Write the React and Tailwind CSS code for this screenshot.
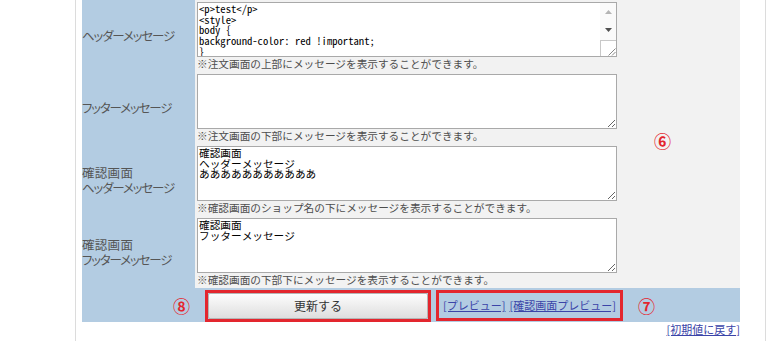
const BLUE = "bg-[#b3cce2]";
const TA =
  "text-black px-[1px] py-[1px] text-[10.67px] leading-[10.7px] font-['Noto_Sans_Mono_CJK_JP','Liberation_Mono',monospace]";

function Grip() {
  return (
    <svg width="9" height="9" viewBox="0 0 9 9" className="block">
      <path d="M8.5 1.5 L1.5 8.5 M8.5 5 L5 8.5" stroke="#888" strokeWidth="1" fill="none" />
    </svg>
  );
}

function ScrollArea({ value }) {
  return (
    <div className="flex w-[420px] h-[55px] border border-[#a9a9a9] bg-white">
      <textarea
        readOnly
        defaultValue={value}
        className={`flex-1 min-w-0 h-full border-0 outline-none bg-white overflow-hidden resize-none ${TA}`}
      />
      <div className="w-[16px] flex flex-col bg-[#fafafa]">
        <div className="h-[17px] flex items-center justify-center">
          <svg width="7" height="4" viewBox="0 0 7 4"><path d="M3.5 0 L7 4 L0 4 Z" fill="#b4b4b4" /></svg>
        </div>
        <div className="h-[20px] flex items-center justify-center">
          <svg width="7" height="4" viewBox="0 0 7 4"><path d="M0 0 L7 0 L3.5 4 Z" fill="#505050" /></svg>
        </div>
        <div className="flex-1 border-l border-t border-[#c8c8c8] bg-white flex items-end justify-end">
          <Grip />
        </div>
      </div>
    </div>
  );
}

function Row({ label, value, caption, scroll }) {
  return (
    <div className="flex h-[72px]">
      <div className={`w-[113px] shrink-0 ${BLUE} flex flex-col justify-center text-[12.5px] text-[#555]`}>
        {label}
      </div>
      <div className="flex-1 bg-[#f2f2f2] pt-[2px] pl-[2px]">
        {scroll ? (
          <ScrollArea value={value} />
        ) : (
          <textarea
            readOnly
            defaultValue={value}
            className={`block w-[420px] h-[55px] border border-[#a9a9a9] bg-white resize overflow-hidden ${TA}`}
          />
        )}
        <p className="text-[10.67px] leading-[13px] text-[#4d4d4d] whitespace-nowrap">{caption}</p>
      </div>
    </div>
  );
}

function Kana({ children }) {
  return <div className="h-[14px] leading-[14px] tracking-[-1.2px] [font-feature-settings:'palt']">{children}</div>;
}
function Kanji({ children }) {
  return <div className="h-[14px] leading-[14px] tracking-[0.3px]">{children}</div>;
}

export default function App() {
  return (
    <div className="w-[769px] h-[341px] bg-white overflow-hidden relative font-['Noto_Sans_CJK_JP','Liberation_Sans',sans-serif]">
      <div className="ml-[75px] w-[691px] h-[341px] border-l border-r border-[#dcdcdc] pl-[6px] pr-[25px]">
        <div className="relative">
          <Row
            label={<Kana>ヘッダーメッセージ</Kana>}
            value={"<p>test</p>\n<style>\nbody {\nbackground-color: red !important;\n}\n</style>\n<p>header</p>\n"}
            caption="※注文画面の上部にメッセージを表示することができます。"
            scroll
          />
          <Row
            label={<Kana>フッターメッセージ</Kana>}
            value=""
            caption="※注文画面の下部にメッセージを表示することができます。"
          />
          <Row
            label={<div className="flex flex-col gap-[1px] pt-[1px]"><Kanji>確認画面</Kanji><Kana>ヘッダーメッセージ</Kana></div>}
            value={"確認画面\nヘッダーメッセージ\nあああああああああああ"}
            caption="※確認画面のショップ名の下にメッセージを表示することができます。"
          />
          <Row
            label={<div className="flex flex-col gap-[1px] pt-[1px]"><Kanji>確認画面</Kanji><Kana>フッターメッセージ</Kana></div>}
            value={"確認画面\nフッターメッセージ"}
            caption="※確認画面の下部下にメッセージを表示することができます。"
          />
          <div className={`flex h-[34px] ${BLUE} pt-[2px]`}>
            <div className="w-[113px] shrink-0 flex justify-end items-center pr-[5px] pb-[2px]">
              <span className="text-[17px] font-bold leading-none text-[#e3262e]">⑧</span>
            </div>
            <div className="ml-[10px] w-[226px] h-[32px] border-[3px] border-[#e3262e] flex">
              <button className="flex-1 m-0 border border-[#b5b5b5] rounded-[2px] bg-gradient-to-b from-[#fdfdfd] to-[#dedede] text-[12px] text-[#333]">
                更新する
              </button>
            </div>
            <div className="ml-[5px] w-[187px] h-[31px] border-[3px] border-[#e3262e] flex items-center justify-center text-[11px] text-[#3b44a8] gap-[4px]">
              <a href="#" className="underline">[プレビュー]</a>
              <a href="#" className="underline">[確認画面プレビュー]</a>
            </div>
            <div className="ml-[15px] flex items-center pb-[2px]">
              <span className="text-[17px] font-bold leading-none text-[#e3262e]">⑦</span>
            </div>
          </div>
          <div className="flex justify-end h-[14px] text-[11px] leading-[14px]">
            <a href="#" className="underline text-[#3b44a8]">[初期値に戻す]</a>
          </div>
          <span className="absolute left-[572px] top-[132px] text-[17px] font-bold leading-none text-[#e3262e]">⑥</span>
        </div>
      </div>
    </div>
  );
}
